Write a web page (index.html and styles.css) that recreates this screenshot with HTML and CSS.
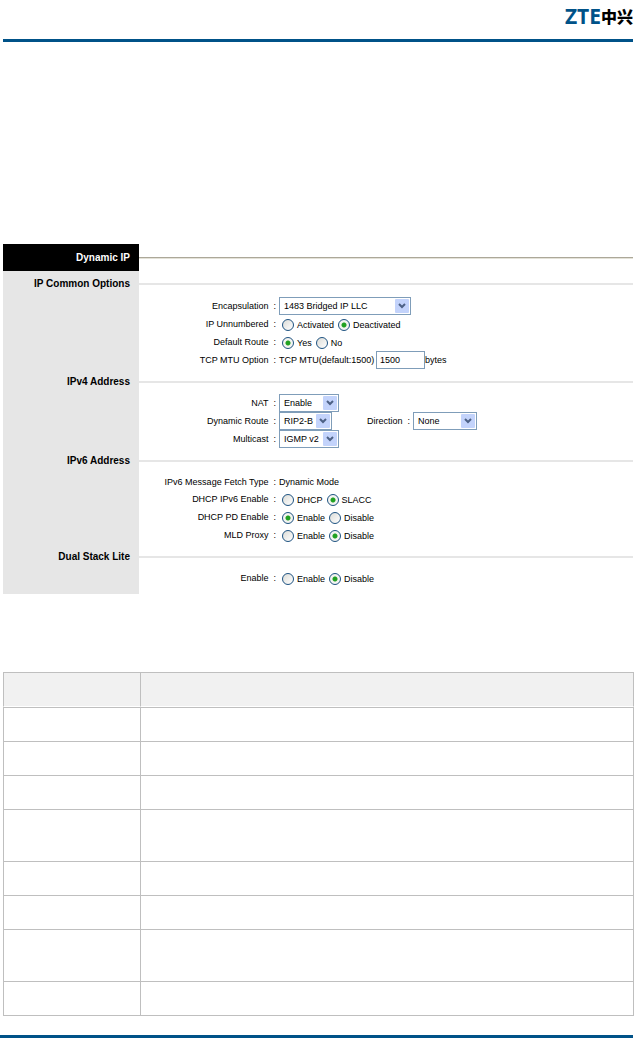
FILE: index.html
```html
<!DOCTYPE html>
<html lang="en">
<head>
    <meta charset="UTF-8">
    <meta name="viewport" content="width=device-width, initial-scale=1">
    <title>Dynamic IP</title>
    <link rel="stylesheet" href="styles.css">
</head>
<body>

<header class="page-header">
    <div class="logo"><span class="logo-latin">ZTE</span><span class="logo-cjk" lang="zh">中兴</span></div>
</header>

<form class="panel">
    <div class="section section-title">
        <h1 class="section-name">Dynamic IP</h1>
        <hr class="title-line">
    </div>

    <div class="section section-first">
        <h2 class="section-name">IP Common Options</h2>
        <div class="section-body">
            <hr class="section-line">
            <div class="row">
                <label class="row-label" for="encapsulation">Encapsulation&nbsp; :</label>
                <select id="encapsulation" class="select-wide">
                    <option>1483 Bridged IP LLC</option>
                </select>
            </div>
            <div class="row" role="radiogroup" aria-labelledby="unnumbered">
                <span class="row-label" id="unnumbered">IP Unnumbered&nbsp; :</span>
                <label class="choice"><input type="radio" name="unnumbered">Activated</label>
                <label class="choice"><input type="radio" name="unnumbered" checked>Deactivated</label>
            </div>
            <div class="row" role="radiogroup" aria-labelledby="defaultRoute">
                <span class="row-label" id="defaultRoute">Default Route&nbsp; :</span>
                <label class="choice"><input type="radio" name="defaultRoute" checked>Yes</label>
                <label class="choice"><input type="radio" name="defaultRoute">No</label>
            </div>
            <div class="row">
                <span class="row-label">TCP MTU Option&nbsp; :</span>
                <label class="mtu-label" for="mtu">TCP MTU(default:1500)</label>
                <input type="text" id="mtu" class="mtu-input" value="1500">
                <span>bytes</span>
            </div>
        </div>
    </div>

    <div class="section">
        <h2 class="section-name">IPv4 Address</h2>
        <div class="section-body">
            <hr class="section-line">
            <div class="row">
                <label class="row-label" for="nat">NAT&nbsp; :</label>
                <select id="nat" class="select-medium">
                    <option>Enable</option>
                </select>
            </div>
            <div class="row">
                <label class="row-label" for="dynamicRoute">Dynamic Route&nbsp; :</label>
                <select id="dynamicRoute" class="select-small">
                    <option>RIP2-B</option>
                </select>
                <label class="direction-label" for="direction">Direction&nbsp; :</label>
                <select id="direction" class="select-direction">
                    <option>None</option>
                </select>
            </div>
            <div class="row">
                <label class="row-label" for="multicast">Multicast&nbsp; :</label>
                <select id="multicast" class="select-medium">
                    <option>IGMP v2</option>
                </select>
            </div>
        </div>
    </div>

    <div class="section">
        <h2 class="section-name">IPv6 Address</h2>
        <div class="section-body">
            <hr class="section-line">
            <div class="row row-text">
                <span class="row-label">IPv6 Message Fetch Type&nbsp; :</span>
                <span>Dynamic Mode</span>
            </div>
            <div class="row" role="radiogroup" aria-labelledby="dhcpIpv6">
                <span class="row-label" id="dhcpIpv6">DHCP IPv6 Enable&nbsp; :</span>
                <label class="choice"><input type="radio" name="dhcpIpv6">DHCP</label>
                <label class="choice"><input type="radio" name="dhcpIpv6" checked>SLACC</label>
            </div>
            <div class="row" role="radiogroup" aria-labelledby="dhcpPd">
                <span class="row-label" id="dhcpPd">DHCP PD Enable&nbsp; :</span>
                <label class="choice"><input type="radio" name="dhcpPd" checked>Enable</label>
                <label class="choice"><input type="radio" name="dhcpPd">Disable</label>
            </div>
            <div class="row" role="radiogroup" aria-labelledby="mldProxy">
                <span class="row-label" id="mldProxy">MLD Proxy&nbsp; :</span>
                <label class="choice"><input type="radio" name="mldProxy">Enable</label>
                <label class="choice"><input type="radio" name="mldProxy" checked>Disable</label>
            </div>
        </div>
    </div>

    <div class="section section-last">
        <h2 class="section-name">Dual Stack Lite</h2>
        <div class="section-body">
            <hr class="section-line">
            <div class="row" role="radiogroup" aria-labelledby="dualStack">
                <span class="row-label" id="dualStack">Enable&nbsp; :</span>
                <label class="choice"><input type="radio" name="dualStack">Enable</label>
                <label class="choice"><input type="radio" name="dualStack" checked>Disable</label>
            </div>
        </div>
    </div>
</form>

<table class="fields">
    <thead>
        <tr><th class="field-col"></th><th></th></tr>
    </thead>
    <tbody>
        <tr><td></td><td></td></tr>
        <tr><td></td><td></td></tr>
        <tr><td></td><td></td></tr>
        <tr class="tall"><td></td><td></td></tr>
        <tr><td></td><td></td></tr>
        <tr><td></td><td></td></tr>
        <tr class="tall"><td></td><td></td></tr>
        <tr><td></td><td></td></tr>
    </tbody>
</table>

<footer class="page-footer"></footer>

</body>
</html>
```
FILE: styles.css
```css
* {
    box-sizing: border-box;
}
body {
    margin: 0;
    background: #fff;
    color: #000;
    font-family: "Liberation Sans", Arial, sans-serif;
    font-size: 9px;
}
.page-header {
    display: flex;
    justify-content: flex-end;
    height: 42px;
    margin: 0 1px 202px 3px;
    border-bottom: 3px solid #005288;
}
.logo {
    display: flex;
    align-items: center;
    height: 33px;
    font-weight: bold;
    line-height: 33px;
}
.logo-latin {
    color: #005288;
    font-family: "Open Sans", sans-serif;
    font-size: 21px;
}
.logo-cjk {
    font-family: "Noto Sans CJK SC", sans-serif;
    font-size: 16px;
    font-weight: 900;
}

/* settings panel */
.panel {
    margin: 0 1px 78px 3px;
}
.section {
    display: flex;
}
.section-name {
    flex: none;
    width: 136px;
    margin: 0;
    padding-right: 9px;
    background: #e6e6e6;
    font-size: 10px;
    line-height: 26px;
    text-align: right;
}
.section-title {
    align-items: center;
}
.section-title .section-name {
    background: #000;
    color: #fff;
    line-height: 27px;
}
.title-line {
    flex: 1;
    height: 2px;
    margin: 0;
    border: 0;
    border-top: 1px solid #aca899;
    background: #e4e2d8;
}
.section-body {
    flex: 1;
}
.section-line {
    height: 2px;
    margin: 12px 0 11px;
    border: 0;
    background: #e6e6e6;
}
.section-first .section-line {
    margin-bottom: 12px;
}
.section-last .section-body {
    padding-bottom: 7px;
}
.row {
    display: flex;
    align-items: center;
    height: 18px;
    white-space: nowrap;
}
.row-text {
    height: 17px;
}
.row-label {
    width: 137px;
    margin-right: 3px;
    text-align: right;
}
.direction-label {
    width: 78px;
    margin-right: 3px;
    text-align: right;
}

/* controls */
select,
input[type="text"] {
    height: 18px;
    margin: 0;
    border: 1px solid #7f9db9;
    border-radius: 0;
    background: #fff;
    color: #000;
    font: inherit;
}
select {
    appearance: none;
    padding: 0 16px 0 4px;
    background: url("data:image/svg+xml,%3Csvg xmlns='http://www.w3.org/2000/svg' width='14' height='14'%3E%3Crect width='14' height='14' rx='1' fill='%23c3d3fb'/%3E%3Cpath d='M4 5l3 3 3-3' fill='none' stroke='%234d6185' stroke-width='2'/%3E%3C/svg%3E") no-repeat right 1px center;
}
.select-wide {
    width: 132px;
}
.select-medium {
    width: 60px;
}
.select-small {
    width: 53px;
}
.select-direction {
    width: 64px;
}
.mtu-label {
    width: 97px;
}
.mtu-input {
    width: 49px;
    padding: 0 3px;
}
.choice {
    display: flex;
    align-items: center;
    gap: 3px;
    margin-left: 3px;
    padding-top: 1px;
}
.choice + .choice {
    margin-left: 4px;
}
input[type="radio"] {
    appearance: none;
    width: 12px;
    height: 12px;
    margin: 0;
    border: 1px solid #1d5281;
    border-radius: 50%;
    background: linear-gradient(135deg, #dcdcd7, #fff);
}
input[type="radio"]:checked {
    background: radial-gradient(circle, #21a121 0 2px, #f4f4f1 3px);
}

/* description table */
.fields {
    width: 100%;
    padding-left: 3px;
    border-spacing: 0;
    table-layout: fixed;
}
.fields th,
.fields td {
    padding: 0;
    border-top: 1px solid #bfbfbf;
    border-left: 1px solid #bfbfbf;
}
.fields th:last-child,
.fields td:last-child {
    border-right: 1px solid #bfbfbf;
}
.fields th {
    height: 35px;
    border-bottom: 1px solid #fff;
    background: #f1f1f1;
}
.fields td {
    height: 34px;
}
.fields .tall td {
    height: 52px;
}
.fields tr:last-child td {
    height: 35px;
    border-bottom: 1px solid #bfbfbf;
}
.fields .field-col {
    width: 137px;
}
.page-footer {
    height: 3px;
    margin: 19px 1px 0 0;
    background: #005288;
}
```
